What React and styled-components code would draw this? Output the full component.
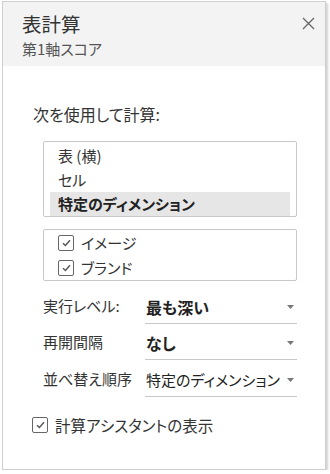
import { createGlobalStyle } from "styled-components";
import styled from "styled-components";

const GlobalStyle = createGlobalStyle`
  html, body {
    margin: 0;
    padding: 0;
    background: #ffffff;
  }
  body {
    font-family: "Noto Sans CJK JP", "Noto Sans", sans-serif;
    font-feature-settings: "palt";
    color: #333333;
  }
`;

const Panel = styled.div`
  margin: 1px 0 0 2px;
  width: 324px;
  height: 469px;
  box-sizing: border-box;
  border: 1px solid #cfcfcf;
  box-shadow: 2px 2px 2px rgba(0, 0, 0, 0.18);
  background: #ffffff;
  display: flex;
  flex-direction: column;
`;

const Header = styled.div`
  background: #f3f3f3;
  height: 64px;
  box-sizing: border-box;
  padding: 8px 10px 0 19px;
  display: flex;
  justify-content: space-between;
  align-items: flex-start;
`;

const Titles = styled.div`
  display: flex;
  flex-direction: column;
`;

const Title = styled.div`
  font-size: 19.5px;
  line-height: 28px;
  color: #333;
`;

const Subtitle = styled.div`
  font-size: 15px;
  line-height: 22px;
  color: #555;
`;

const Close = styled.button`
  border: 0;
  background: none;
  padding: 0;
  margin-top: 7px;
  width: 14px;
  height: 14px;
  cursor: pointer;
`;

const Body = styled.div`
  padding: 36px 28px 0 40px;
  display: flex;
  flex-direction: column;
`;

const SectionLabel = styled.div`
  font-size: 16px;
  line-height: 24px;
  margin-left: -10px;
  margin-bottom: 15px;
`;

const Box = styled.div`
  border: 1px solid #c8c8c8;
  border-radius: 2px;
  padding: ${(p) => p.$pad || "2px 6px 0"};
  margin-bottom: ${(p) => p.$gap || "12px"};
`;

const ListItem = styled.div`
  height: 24px;
  line-height: 24px;
  padding-left: 8px;
  font-size: 15px;
  font-weight: ${(p) => (p.$selected ? 700 : 400)};
  background: ${(p) => (p.$selected ? "#e6e6e6" : "transparent")};
  color: ${(p) => (p.$selected ? "#222" : "#333")};
`;

const CheckRow = styled.label`
  display: flex;
  align-items: center;
  gap: 7px;
  height: 25px;
  font-size: ${(p) => p.$size || "15px"};
  padding-left: ${(p) => p.$indent || "8px"};
`;

const CheckBox = styled.span`
  width: 16px;
  height: 16px;
  box-sizing: border-box;
  border: 1px solid #666;
  border-radius: 2px;
  display: flex;
  align-items: center;
  justify-content: center;
  background: #fff;
  flex-shrink: 0;
`;

const FieldRow = styled.div`
  display: flex;
  align-items: center;
  height: 36.5px;
`;

const FieldLabel = styled.div`
  width: 102px;
  font-size: 15px;
  color: #333;
  flex-shrink: 0;
`;

const FieldSelect = styled.div`
  flex: 1;
  height: 100%;
  box-sizing: border-box;
  border-bottom: 1px solid #c8c8c8;
  display: flex;
  align-items: center;
  justify-content: space-between;
  padding: 4px 3px 0 1px;
  font-size: ${(p) => (p.$bold ? "16px" : "15px")};
  font-weight: ${(p) => (p.$bold ? 700 : 400)};
  color: #222;
`;

const Footer = styled.div`
  margin-top: 16px;
  margin-left: -11px;
`;

const Check = () => (
  <CheckBox>
    <svg width="9" height="8" viewBox="0 0 9 8">
      <path d="M1 4.2 L3.4 6.5 L8 1.2" fill="none" stroke="#555" strokeWidth="1.4" />
    </svg>
  </CheckBox>
);

const Arrow = () => (
  <svg width="7" height="4" viewBox="0 0 7 4">
    <path d="M0 0 H7 L3.5 4 Z" fill="#777" />
  </svg>
);

export default function App() {
  const items = [
    { name: "表 (横)" },
    { name: "セル" },
    { name: "特定のディメンション", selected: true },
  ];
  const fields = [
    { label: "実行レベル:", value: "最も深い", bold: true },
    { label: "再開間隔", value: "なし", bold: true },
    { label: "並べ替え順序", value: "特定のディメンション" },
  ];
  return (
    <>
      <GlobalStyle />
      <Panel>
        <Header>
          <Titles>
            <Title>表計算</Title>
            <Subtitle>第1軸スコア</Subtitle>
          </Titles>
          <Close aria-label="close">
            <svg width="13" height="13" viewBox="0 0 13 13">
              <path d="M1 1 L12 12 M12 1 L1 12" stroke="#666" strokeWidth="1.3" />
            </svg>
          </Close>
        </Header>
        <Body>
          <SectionLabel>次を使用して計算:</SectionLabel>
          <Box>
            {items.map((item) => (
              <ListItem key={item.name} $selected={item.selected}>
                {item.name}
              </ListItem>
            ))}
          </Box>
          <Box $pad="0 6px 0" $gap="6px">
            <CheckRow $indent="8px">
              <Check />
              イメージ
            </CheckRow>
            <CheckRow $indent="8px">
              <Check />
              ブランド
            </CheckRow>
          </Box>
          {fields.map((f) => (
            <FieldRow key={f.label}>
              <FieldLabel>{f.label}</FieldLabel>
              <FieldSelect $bold={f.bold}>
                <span>{f.value}</span>
                <Arrow />
              </FieldSelect>
            </FieldRow>
          ))}
          <Footer>
            <CheckRow $indent="0" $size="15.5px">
              <Check />
              計算アシスタントの表示
            </CheckRow>
          </Footer>
        </Body>
      </Panel>
    </>
  );
}
